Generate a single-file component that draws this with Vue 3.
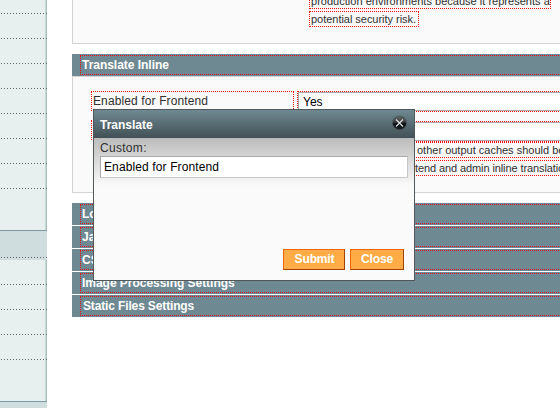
<script setup>
const upperItems = 9
const lowerItems = 5
const closedSections = [
  'Locale Options',
  'JavaScript Settings',
  'CSS Settings',
  'Image Processing Settings',
  'Static Files Settings',
]
</script>

<template>
  <div class="page">
    <aside class="side">
      <div class="group upper">
        <div v-for="n in upperItems" :key="n" class="item"></div>
      </div>
      <div class="side-head"></div>
      <div class="group lower">
        <div v-for="n in lowerItems" :key="n" class="item"></div>
      </div>
      <div class="side-foot"></div>
    </aside>

    <main class="content">
      <section class="fieldset first">
        <div class="note"><span class="t n1">production environments because it represents a</span></div>
        <div class="note"><span class="t n2">potential security risk.</span></div>
      </section>

      <h3 class="bar open"><span class="t">Translate Inline</span></h3>
      <section class="fieldset second">
        <div class="row">
          <label class="t label">Enabled for Frontend</label>
          <div class="t field"><div class="select">Yes</div></div>
        </div>
        <div class="row two">
          <label class="t label"></label>
          <div class="t field"><div class="select"></div></div>
        </div>
        <div class="hint t">other output caches should be</div>
        <div class="hint t last">tend and admin inline translatio</div>
      </section>

      <div class="bars">
        <h3 v-for="s in closedSections" :key="s" class="bar"><span class="t">{{ s }}</span></h3>
      </div>
    </main>

    <div class="dialog">
      <header class="title">
        <span>Translate</span>
        <svg width="16" height="16" viewBox="0 0 16 16">
          <defs>
            <linearGradient id="ball" x1="0" y1="0" x2="0" y2="1">
              <stop offset="0" stop-color="#66696a" />
              <stop offset=".45" stop-color="#35393b" />
              <stop offset=".55" stop-color="#080c0e" />
              <stop offset="1" stop-color="#1c2529" />
            </linearGradient>
          </defs>
          <circle cx="7.5" cy="8" r="7" fill="url(#ball)" stroke="#4c5558" stroke-width="1" />
          <path d="M4 4.5l7 7M11 4.5l-7 7" stroke="#e2e5e6" stroke-width="1.1" />
        </svg>
      </header>
      <div class="body">
        <div class="custom">Custom:</div>
        <div class="input"><span>Enabled for Frontend</span></div>
        <div class="actions">
          <button class="submit">Submit</button>
          <button class="close">Close</button>
        </div>
      </div>
    </div>
  </div>
</template>

<style>
body {
  margin: 0;
  background: #fff;
}
</style>

<style scoped>
* {
  box-sizing: border-box;
}
.page {
  position: relative;
  width: 560px;
  height: 408px;
  overflow: hidden;
  display: grid;
  grid-template-columns: 47px 511px;
  column-gap: 25px;
  font-family: "Liberation Sans", Arial, sans-serif;
  color: #2f2f2f;
}
.side {
  height: 408px;
  display: flex;
  flex-direction: column;
}
.group {
  background: linear-gradient(90deg, transparent 45px, #c5d8d5 45px 46px, #a9c0bd 46px) #e7efef;
}
.upper {
  height: 230px;
  overflow: hidden;
}
.item {
  height: 25px;
  background: repeating-linear-gradient(90deg, transparent 0 1px, #61686a 1px 2px, transparent 2px 3px) 0 100% / 100% 1px no-repeat;
}
.upper .item:first-child {
  height: 14px;
}
.upper .item:last-child {
  background: none;
}
.side-head {
  height: 30px;
  border-top: 1px solid #7d98a3;
  background: repeating-linear-gradient(90deg, transparent 0 1px, #61686a 1px 2px, transparent 2px 3px) 0 26px / 100% 1px no-repeat #d0dddf;
}
.lower {
  height: 141px;
}
.lower .item:last-child {
  background: none;
}
.side-foot {
  flex: 1;
  border-top: 1px solid #7d98a3;
  background: #d0dddf;
}
.t {
  border: 1px dotted #f00;
}
.fieldset {
  background: #fafafa;
  border: 1px solid #d3d3d3;
  border-right: 0;
}
.first {
  height: 44px;
  border-top: 0;
  margin-bottom: 10px;
  padding-left: 236px;
  overflow: hidden;
}
.note {
  display: flex;
  font-size: 11px;
  line-height: 14px;
  white-space: nowrap;
}
.note .t {
  height: 16px;
  padding-left: 1px;
}
.n1 {
  width: 242px;
  margin-top: -7px;
  letter-spacing: 0.02px;
}
.n2 {
  width: 110px;
  margin-top: 2px;
  letter-spacing: -0.03px;
}
.bar {
  margin: 0;
  height: 22px;
  padding: 1px 0 1px 8px;
  background: #6f8992;
  color: #fff;
  font-size: 12px;
  line-height: 18px;
  letter-spacing: -0.03px;
}
.bar .t {
  display: block;
  height: 20px;
  padding-left: 1px;
}
.bars .bar:last-child {
  letter-spacing: -0.14px;
}
.bars .bar:last-child .t {
  padding-left: 2px;
}
.second {
  height: 117px;
  padding: 14px 0 0 18px;
  margin-bottom: 10px;
}
.row {
  display: flex;
  gap: 3px;
  height: 21px;
}
.row.two {
  margin-top: 9px;
}
.label {
  width: 203px;
  height: 20px;
  padding-left: 1px;
  font-size: 12px;
  line-height: 18px;
  letter-spacing: 0.12px;
}
.row.two .label {
  margin-top: -1px;
}
.field {
  flex: 1;
}
.select {
  height: 19px;
  border: 1px solid #aaa;
  background: #fff;
  padding-left: 4px;
  font-size: 12px;
  line-height: 18px;
  color: #000;
}
.hint {
  height: 16px;
  margin-left: 218px;
  padding-left: 107px;
  font-size: 11px;
  line-height: 14px;
  white-space: nowrap;
}
.hint.last {
  margin-top: 2px;
  padding-left: 105px;
  letter-spacing: -0.1px;
}
.bars {
  display: grid;
  row-gap: 1px;
}
.dialog {
  position: absolute;
  left: 93px;
  top: 109px;
  width: 322px;
  height: 172px;
  border: 1px solid #50585b;
  background: #fafafa;
}
.title {
  height: 28px;
  padding: 0 6px 0 6px;
  display: flex;
  align-items: center;
  justify-content: space-between;
  background: linear-gradient(#6f8992, #425056);
  color: #fff;
  font-size: 12px;
  font-weight: bold;
}
.title span {
  padding-top: 2px;
}
.title svg {
  margin-bottom: 2px;
}
.body {
  height: 142px;
  padding: 2px 6px 0;
  background: linear-gradient(#bcbcbc, #fafafa 48px);
}
.custom {
  height: 16px;
  font-size: 12px;
  line-height: 16px;
  letter-spacing: 0.3px;
}
.input {
  height: 22px;
  border: 1px solid #aaa;
  border-right-color: #c8c8c8;
  border-bottom-color: #c8c8c8;
  background: #fff;
  padding-left: 3px;
  font-size: 12px;
  line-height: 20px;
  letter-spacing: 0.12px;
  color: #000;
}
.actions {
  display: flex;
  justify-content: flex-end;
  gap: 5px;
  padding: 71px 4px 0 0;
}
button {
  height: 21px;
  padding: 0;
  border: 1px solid;
  border-color: #ed6502 #a04300 #a04300 #ed6502;
  background: #ffac47;
  color: #fff;
  font: bold 12px/19px "Liberation Sans", Arial, sans-serif;
  letter-spacing: -0.15px;
}
.submit {
  width: 62px;
  padding-left: 1px;
}
.close {
  width: 54px;
}
</style>
